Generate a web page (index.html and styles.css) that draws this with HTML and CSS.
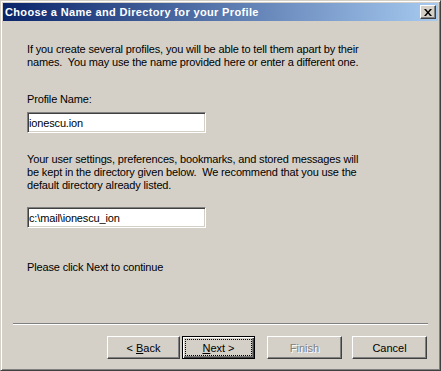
FILE: index.html
```html
<!DOCTYPE html>
<html lang="en">
<head>
    <meta charset="UTF-8">
    <meta name="viewport" content="width=device-width, initial-scale=1.0">
    <title>Choose a Name and Directory for your Profile</title>
    <link rel="stylesheet" href="styles.css">
</head>
<body>

    <div class="window">
        <!-- Title bar -->
        <div class="titlebar">
            <span class="title">Choose a Name and Directory for your Profile</span>
            <button class="close" aria-label="Close">
                <svg width="8" height="7" viewBox="0 0 8 7">
                    <path d="M0 0h2l2 2.5L6 0h2L5 3.5 8 7H6L4 4.5 2 7H0l3-3.5z" fill="#000"/>
                </svg>
            </button>
        </div>

        <!-- Wizard page -->
        <div class="content">
            <p class="intro">If you create several profiles, you will be able to tell them apart by their names.&nbsp; You may use the name provided here or enter a different one.</p>
            <label class="label" for="name">Profile Name:</label>
            <input class="field" id="name" type="text" value="ionescu.ion">
            <p class="dir-text">Your user settings, preferences, bookmarks, and stored messages will be kept in the directory given below.&nbsp; We recommend that you use the default directory already listed.</p>
            <input class="field" type="text" value="c:\mail\ionescu_ion">
            <p class="hint">Please click Next to continue</p>
        </div>

        <!-- Buttons -->
        <div class="footer">
            <div class="separator"></div>
            <div class="buttons">
                <button class="btn narrow">&lt; <u>B</u>ack</button>
                <button class="btn narrow default"><span class="focus"><u>N</u>ext &gt;</span></button>
                <button class="btn disabled">Finish</button>
                <button class="btn">Cancel</button>
            </div>
        </div>
    </div>

</body>
</html>
```

FILE: styles.css
```css
body {
    margin: 0;
    font-family: "Liberation Sans", Arial, sans-serif;
    font-size: 11px;
    background-color: #d4d0c8;
}

.window {
    width: 441px;
    height: 371px;
    box-sizing: border-box;
    display: flex;
    flex-direction: column;
    padding: 1px;
    border: 1px solid;
    border-color: #d4d0c8 #404040 #404040 #d4d0c8;
    box-shadow: inset 1px 1px #ffffff, inset -1px -1px #808080;
    background-color: #d4d0c8;
}

.titlebar {
    height: 18px;
    margin: 1px 1px 0 1px;
    display: flex;
    align-items: center;
    justify-content: space-between;
    padding: 0 2px 0 2px;
    background: linear-gradient(to right, #0a246a, #a6caf0);
}

.title {
    color: white;
    font-weight: bold;
    font-size: 11px;
    letter-spacing: 0.35px;
}

.close {
    width: 16px;
    height: 14px;
    padding: 0;
    display: flex;
    align-items: center;
    justify-content: center;
    border: 1px solid;
    border-color: #ffffff #404040 #404040 #ffffff;
    box-shadow: inset -1px -1px #808080;
    background-color: #d4d0c8;
}

.content {
    padding: 22px 0 0 25px;
    color: black;
    letter-spacing: -0.15px;
}

.content p {
    margin: 0;
    line-height: 13px;
    width: 340px;
}

.label {
    display: block;
    margin-top: 24px;
    line-height: 13px;
}

.field {
    display: block;
    width: 179px;
    height: 21px;
    box-sizing: border-box;
    margin: 6px 0 0 0;
    padding: 0 1px;
    font-family: "Liberation Sans", Arial, sans-serif;
    font-size: 11px;
    letter-spacing: -0.15px;
    color: black;
    background: white;
    border: 1px solid;
    border-color: #808080 #ffffff #ffffff #808080;
    box-shadow: inset 1px 1px #404040, inset -1px -1px #d4d0c8;
    outline: none;
}

.dir-text {
    margin-top: 20px !important;
}

.dir-text + .field {
    margin-top: 15px;
}

.hint {
    margin-top: 33px !important;
}

.footer {
    margin-top: auto;
    padding: 0 11px 10px 11px;
}

.separator {
    height: 0;
    border-top: 1px solid #808080;
    border-bottom: 1px solid #ffffff;
    margin-bottom: 11px;
}

.buttons {
    display: flex;
    justify-content: flex-end;
    padding-right: 1px;
}

.btn {
    width: 75px;
    height: 23px;
    box-sizing: border-box;
    padding: 0;
    margin-left: 10px;
    font-family: "Liberation Sans", Arial, sans-serif;
    font-size: 11px;
    color: black;
    background-color: #d4d0c8;
    border: 1px solid;
    border-color: #ffffff #404040 #404040 #ffffff;
    box-shadow: inset -1px -1px #808080;
}

.narrow {
    width: 73px;
}

.narrow + .narrow {
    margin-left: 2px;
}

.default {
    border: 1px solid #000000;
    box-shadow: inset 1px 1px #ffffff, inset -1px -1px #404040, inset -2px -2px #808080;
    padding: 3px;
}

.focus {
    display: flex;
    align-items: center;
    justify-content: center;
    height: 100%;
    outline: 1px dotted #000000;
}

.btn.default + .btn {
    margin-left: 12px;
}

.disabled {
    color: #808080;
    text-shadow: 1px 1px #ffffff;
}
```
